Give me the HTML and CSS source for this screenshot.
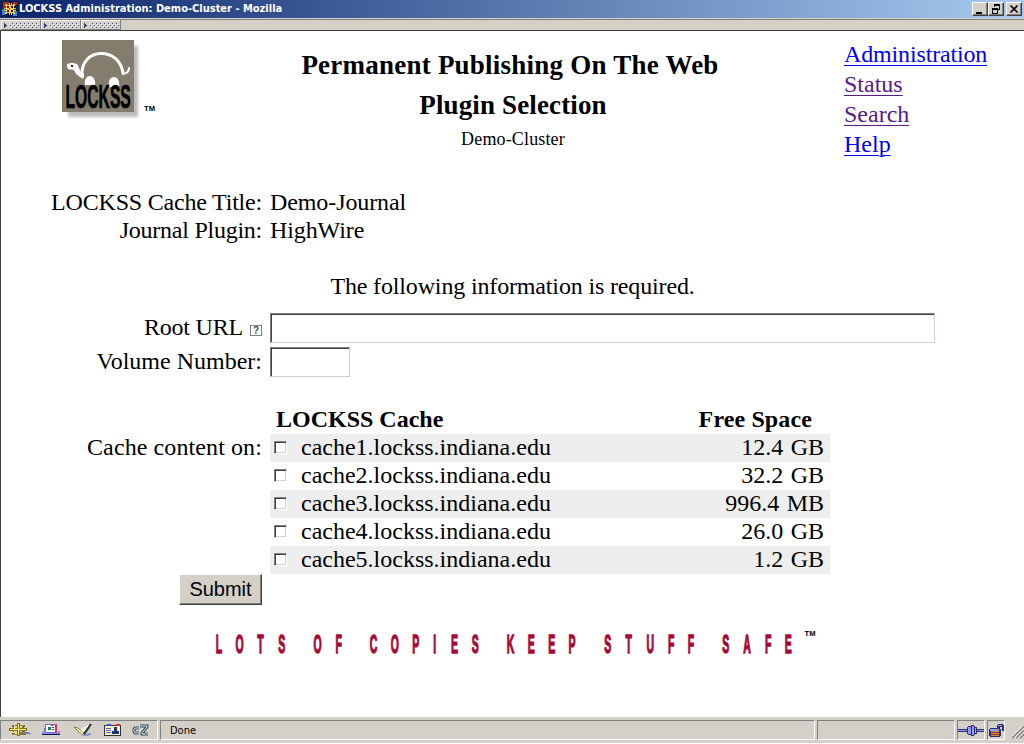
FILE: index.html
```html
<!DOCTYPE html>
<html lang="en">
<head>
<meta charset="utf-8">
<title>LOCKSS Administration: Demo-Cluster</title>
<link rel="stylesheet" href="styles.css">
</head>
<body>
<div class="window">
  <header class="titlebar">
    <svg class="app-icon" width="16" height="16" viewBox="0 0 16 16" shape-rendering="crispEdges">
      <path fill="#102040" d="M0 0h16v16H0z"/><path fill="#b82c18" d="M1 1h6v6H1zM11 1h4v3h-4z"/><path fill="#3888d8" d="M0 8h3v6H0zM11 10h4v5h-4z"/>
      <path fill="#ffc850" d="M7 2h1v12H7zM9 2h1v12H9zM2 7h12v1H2zM2 9h12v1H2zM4 4h8v8H4z"/><path fill="#ffc850" d="M3 3h2v2H3zM11 3h2v2h-2zM3 11h2v2H3zM11 11h2v2h-2z"/>
      <path fill="#502010" d="M5 5h2v2H5zM9 5h2v2H9zM5 9h2v2H5zM9 9h2v2H9zM7 7h1v1H7z"/>
    </svg>
    <span class="window-title">LOCKSS Administration: Demo-Cluster - Mozilla</span>
    <span class="controls">
      <i class="control"><svg width="14" height="12" viewBox="0 0 14 12" shape-rendering="crispEdges"><path d="M3 9h6v2H3z"/></svg></i>
      <i class="control"><svg width="14" height="12" viewBox="0 0 14 12" shape-rendering="crispEdges"><path fill-rule="evenodd" d="M5 1h6v6H9V6h1V3H6v1H5zM3 5h6v6H3zM4 7v3h4V7z"/></svg></i>
      <i class="control close"><svg width="14" height="12" viewBox="0 0 14 12"><path d="M3.5 2.5l7 7M10.5 2.5l-7 7" stroke="#000" stroke-width="1.700"/></svg></i>
    </span>
  </header>
  <div class="toolbar">
    <svg width="122" height="10" viewBox="0 0 122 10" shape-rendering="crispEdges">
      <defs>
        <pattern id="dots" width="4" height="4" patternUnits="userSpaceOnUse"><path fill="#fff" d="M0 0h1v1H0zM2 2h1v1H2z"/><path fill="#484c7c" d="M1 1h1v1H1zM3 3h1v1H3z"/></pattern>
        <g id="grip"><path fill="#fff" d="M0 0h39v1H0zM0 0h1v9H0z"/><path fill="#808080" d="M39 0h1v10h-1zM0 9h40v1H0z"/><path fill="#383c74" d="M3 3h1v5H3zM4 4h1v3H4zM5 5h1v1H5z"/><path fill="url(#dots)" d="M8 3h30v5H8z"/></g>
      </defs>
      <use href="#grip" x="1"/><use href="#grip" x="41"/><use href="#grip" x="81"/>
    </svg>
  </div>
  <main class="page">
    <div class="masthead">
      <svg class="logo" width="100" height="84" viewBox="0 0 100 84">
        <defs><filter id="soft" x="-10%" y="-10%" width="120%" height="120%"><feGaussianBlur stdDeviation="1.800"/></filter></defs>
        <rect x="6" y="6" width="70" height="71" fill="#bdb9bd" filter="url(#soft)"/>
        <rect x="0" y="0" width="72" height="72" fill="#847c6c"/>
        <g fill="none" stroke="#fff" stroke-linecap="round" stroke-linejoin="round">
          <path stroke-width="3" d="M20 36C19 22 28 13.500 39 13.500S59 20 61 33"/>
          <path stroke-width="4" d="M7 26h7L17 33l3 3"/>
          <path stroke-width="2" d="M61 34q6-1 6-6"/>
        </g>
        <path fill="#fff" d="M5 24q5-2 10 0l2 7 5 3-1 5-7-5-2-4-6-1zM23 45c-1-6 2-9 5-9s6 4 5 9zM47 47c-1-6 1-10 5-10s6 5 5 10z"/>
        <rect x="9" y="25" width="2" height="2" fill="#222"/>
        <text class="logo-word" transform="translate(3.500 68) scale(.475 1)">LOCKSS</text>
        <text class="logo-tm" x="82" y="71" textLength="11" lengthAdjust="spacingAndGlyphs">TM</text>
      </svg>
      <div class="titles">
        <h1 class="heading main-heading">Permanent Publishing On The Web</h1>
        <h2 class="heading sub-heading">Plugin Selection</h2>
        <p class="cluster">Demo-Cluster</p>
      </div>
      <nav class="links">
        <a class="link administration">Administration</a>
        <a class="link visited">Status</a>
        <a class="link visited">Search</a>
        <a class="link">Help</a>
      </nav>
    </div>
    <div class="summary">
      <span class="label cache-title">LOCKSS Cache Title:</span><span class="value">Demo-Journal</span>
      <span class="label plugin">Journal Plugin:</span><span class="value">HighWire</span>
    </div>
    <p class="notice">The following information is required.</p>
    <form class="form">
      <label class="label root" for="root-url"><span>Root URL</span><b class="help">?</b></label>
      <input class="field wide" id="root-url" type="text">
      <label class="label volume" for="volume">Volume Number:</label>
      <input class="field short" id="volume" type="text">
    </form>
    <div class="caches">
      <span class="label content-on">Cache content on:</span>
      <div class="table">
        <div class="table-head"><span>LOCKSS Cache</span><span class="head-space">Free Space</span></div>
        <div class="row shaded"><i class="check"></i><span class="host">cache1.lockss.indiana.edu</span><span class="size">12.4 GB</span></div>
        <div class="row"><i class="check"></i><span class="host">cache2.lockss.indiana.edu</span><span class="size">32.2 GB</span></div>
        <div class="row shaded"><i class="check"></i><span class="host">cache3.lockss.indiana.edu</span><span class="size">996.4 MB</span></div>
        <div class="row"><i class="check"></i><span class="host">cache4.lockss.indiana.edu</span><span class="size">26.0 GB</span></div>
        <div class="row shaded"><i class="check"></i><span class="host">cache5.lockss.indiana.edu</span><span class="size">1.2 GB</span></div>
      </div>
    </div>
    <button class="submit" type="button">Submit</button>
    <svg class="tagline" width="610" height="34" viewBox="0 0 610 34">
      <text class="tagline-text" transform="translate(0 26.500) scale(.42 1)" x="4 51.500 103 153 190 237 289 330 371 421 472 522 564 614 650 697 747 796 844 885 929 980 1030 1081 1128 1170 1210 1260 1312 1359">LOTS OF COPIES KEEP STUFF SAFE</text>
      <text class="tagline-tm" x="590.500" y="10" textLength="11" lengthAdjust="spacingAndGlyphs">TM</text>
    </svg>
  </main>
  <footer class="statusbar">
    <div class="panel components">
      <svg width="156" height="18" viewBox="0 0 156 18" shape-rendering="crispEdges">
        <g>
          <path fill="#7878d8" d="M18 11h10v1h2v1h-5v1h-7z"/>
          <path fill="#88701c" d="M16 2h3v13h-3zM8 7h18v3H8zM11 4h2v2h-2zM22 4h2v2h-2zM11 12h2v2h-2zM22 12h2v2h-2z"/>
          <path fill="#88701c" fill-rule="evenodd" d="M14 4h7v1h2v2h1v4h-2v2h-2v1h-6v-1h-1v-2h-1V6h2zM14 6v2h2V6zM19 6v2h2V6zM14 10v2h2v-2zM19 10v2h2v-2z"/>
          <path fill="#fff088" d="M17 3h1v11h-1zM9 8h16v1H9zM14 5h2v1h-2zM19 5h2v1h-2zM13 6h1v2h-1zM13 10h1v2h-1zM14 12h2v1h-2z"/>
        </g>
        <g>
          <path fill="#7070d0" d="M44 3h12v9H43z"/><path fill="#f8f8ff" d="M45 4h9v7h-9z"/><path fill="#e03050" d="M50 3h2v2h-2zM54 4h2v8h-2z"/><path fill="#208040" d="M47 6h3v3h-3z"/><path fill="#4040b0" d="M51 6h2v1h-2zM51 8h2v1h-2z"/>
          <path fill="#8888e8" d="M42 10h3v2h12v-2h2v3H41z"/><path fill="#101050" d="M41 13h18v1H41z"/>
        </g>
        <g shape-rendering="auto">
          <path fill="#8888e0" d="M80 14l9-2 1 2-5 1z"/><path fill="#fff" d="M79 9l8-5 3 1-6 8-4 1z"/><path fill="#fff8a8" stroke="#55503c" stroke-width=".7" d="M73 6l4 1 7 6-2 1-4-3z"/><path stroke="#202820" stroke-width="2" d="M90 3l-7 10"/><path stroke="#406850" d="M89 6l-5 7"/>
        </g>
        <g>
          <path fill="#303040" d="M103 4h17v11h-17z"/><path fill="#fff8c0" d="M104 5h15v9h-15z"/><path fill="#6060c0" d="M105 7h5v1h-5zM105 9h5v1h-5zM105 11h5v1h-5z"/><path fill="#203080" d="M113 6h3v4h-3zM111 10h7v3h-7z"/><path fill="#3050e0" d="M106 3h4v2h-4z"/><path fill="#e03030" d="M115 3h4v2h-4z"/>
        </g>
        <g fill="none" shape-rendering="auto">
          <path stroke="#3c4c5c" stroke-width="3" d="M138 7h-4l-1 1.500v2l1 1.500h4M139 5h7v1l-5 6v1h6"/>
          <path stroke="#d0e8f0" d="M138 7h-4l-1 1.500v2l1 1.500h4M139 5h7v1l-5 6v1h6"/>
        </g>
      </svg>
    </div>
    <div class="panel message">Done</div>
    <div class="panel progress"></div>
    <div class="panel online"><svg width="26" height="18" viewBox="0 0 26 18" shape-rendering="crispEdges"><path fill="#303068" d="M0 8h9V6h1V5h3V4h3v1h1v1h2v2h7v3h-7v2h-2v1h-1v1h-3v-1h-3v-1H9v-2H0z"/><path fill="#9098f8" d="M0 9h9v1H0zM10 6h3v7h-3zM14 5h2v9h-2zM17 7h1v5h-1zM19 9h7v1h-7z"/></svg></div>
    <div class="panel security"><svg width="16" height="18" viewBox="0 0 16 18" shape-rendering="crispEdges"><path fill="#303068" d="M2 7h7V4h1V3h5v1h1v6h-2V6h-2v2h1v7h-1v1H2v-1H1V8h1z"/><path fill="#9098f8" d="M2 8h9v2H2zM10 4h4v1h-4z"/><path fill="#c09830" d="M3 10h8v5H3z"/><path fill="#b02040" d="M3 11h8v1H3zM3 13h8v1H3z"/></svg></div>
    <svg class="resizer" width="12" height="14" viewBox="0 0 12 14"><path d="M0 13L12 1M4 13l8-8M8 13l4-4" stroke="#85817b" stroke-width="1.800"/><path d="M-1.500 13L12-.5M2.500 13L12 3.500M6.500 13L12 7.500" stroke="#fff"/></svg>
  </footer>
</div>
</body>
</html>
```
FILE: styles.css
```css
* { box-sizing: border-box; }
body { margin: 0; background: #fff; color: #000; font-family: "Liberation Serif", "Times New Roman", serif; font-size: 24px; line-height: 28px; }
h1, h2, p { margin: 0; }
svg { display: block; flex: none; }

.window { width: 1024px; height: 744px; display: flex; flex-direction: column; overflow: hidden; }
.titlebar { height: 18px; flex: none; display: flex; align-items: center; padding: 0 2px; background: linear-gradient(90deg, #0a246a, #a6caf0); }
.window-title { margin-left: 1px; color: #fff; font: bold 11px/18px "DejaVu Sans Condensed", "DejaVu Sans", sans-serif; white-space: nowrap; }
.controls { margin-left: auto; display: flex; }
.control { width: 16px; height: 14px; padding: 1px; background: #d4d0c8; border: 1px solid; border-color: #fff #404040 #404040 #fff; box-shadow: inset -1px -1px #808080; }
.control svg { margin: -1px 0 0 -1px; }
.close { margin-left: 2px; }

.toolbar { height: 13px; flex: none; padding-top: 1px; background: #d4d0c8; border-top: 1px solid #d4d0c8; border-bottom: 1px solid #404040; box-shadow: inset 0 1px #808080; }

.page { flex: 1; min-height: 0; border-left: 1px solid #404040; }
.masthead { display: grid; grid-template-columns: 100px 1fr 180px; height: 157px; padding: 8px 0 0 61px; }
.logo { margin-top: 1px; }
.titles { display: flex; flex-direction: column; align-items: center; padding: 10px 0 0 20px; }
.heading { font-size: 27px; line-height: 32px; font-weight: bold; white-space: nowrap; }
.main-heading { margin-right: 6px; letter-spacing: .23px; }
.sub-heading { margin-top: 8px; letter-spacing: .13px; }
.cluster { font-size: 18px; line-height: 20px; margin-top: 8px; letter-spacing: .15px; }
.links { display: flex; flex-direction: column; align-items: flex-start; }
.link { line-height: 30px; color: #0000ee; text-decoration: underline; text-decoration-thickness: 1px; text-underline-offset: 3px; }
.visited { color: #551a8b; }
.administration { letter-spacing: -.15px; }
.logo-word { font: bold 33px "Liberation Sans", Arial, sans-serif; stroke: #000; stroke-width: .5px; vector-effect: non-scaling-stroke; }
.logo-tm, .tagline-tm { font: bold 7px "Liberation Sans", Arial, sans-serif; }

.summary, .form { display: grid; grid-template-columns: 261px 1fr; column-gap: 8px; }
.label { text-align: right; white-space: nowrap; }
.summary > *, .form > * { justify-self: start; }
.summary > .label, .form > .label { justify-self: end; }
.cache-title { letter-spacing: -.2px; }
.plugin { letter-spacing: -.25px; }
.value { letter-spacing: -.1px; }
.notice { margin-top: 28px; text-align: center; letter-spacing: -.15px; }
.form { margin-top: 13px; row-gap: 4px; align-items: center; }
.form .label { margin-top: -2px; }
.root { display: flex; align-items: center; gap: 7px; letter-spacing: -.2px; }
.help { width: 12px; height: 11px; margin-top: 6px; border: 1px solid #808080; background: #fff; color: #505050; font: bold 10px/9px "Liberation Sans", Arial, sans-serif; text-align: center; }
.field { height: 30px; padding: 2px 4px; background: #fff; border: 1px solid; border-color: #808080 #d4d0c8 #d4d0c8 #808080; border-radius: 0; box-shadow: inset 1px 1px #404040; outline: 0; font: 24px "Liberation Serif", serif; }
.wide { width: 665px; }
.short { width: 80px; }

.caches { display: grid; grid-template-columns: 261px 560px; column-gap: 8px; margin-top: 29px; }
.content-on { padding-top: 27px; letter-spacing: .1px; }
.table-head { display: flex; justify-content: space-between; height: 28px; padding: 0 18px 0 6px; font-weight: bold; line-height: 26px; }
.head-space { letter-spacing: .12px; }
.row { display: flex; align-items: center; height: 28px; padding: 0 6px 2px 4px; }
.shaded { background: #eee; }
.check { width: 13px; height: 13px; margin-right: 14px; background: #fff; border: 1px solid; border-color: #808080 #fff #fff #808080; box-shadow: inset 1px 1px #404040, inset -1px -1px #d4d0c8; }
.size { margin-left: auto; word-spacing: 1.5px; }
.submit { display: block; width: 83px; height: 31px; margin: 0 0 0 178px; padding: 0; background: #d4d0c8; border: 1px solid; border-color: #fff #404040 #404040 #fff; border-radius: 0; box-shadow: inset -1px -1px #808080; font: 20px "Liberation Sans", Arial, sans-serif; color: #000; }
.tagline { margin: 21px 0 0 213px; }
.tagline-text { font: bold 25px "Liberation Sans", Arial, sans-serif; fill: #a80738; stroke: #a80738; stroke-width: 1px; white-space: pre; }
.tagline-text, .logo-word { vector-effect: non-scaling-stroke; }

.statusbar { height: 27px; flex: none; display: flex; gap: 2px; padding: 3px 0 4px; background: #d4d0c8; border-bottom: 1px solid #fff; }
.panel { height: 20px; border: 1px solid; border-color: #808080 #fff #fff #808080; }
.components { width: 158px; overflow: hidden; }
.message { flex: 1; padding-left: 9px; font: 11px/19px "DejaVu Sans Condensed", "DejaVu Sans", sans-serif; }
.progress { width: 138px; }
.online { width: 28px; }
.security { width: 18px; }
.resizer { margin: 5px 0 0 5px; }
```
